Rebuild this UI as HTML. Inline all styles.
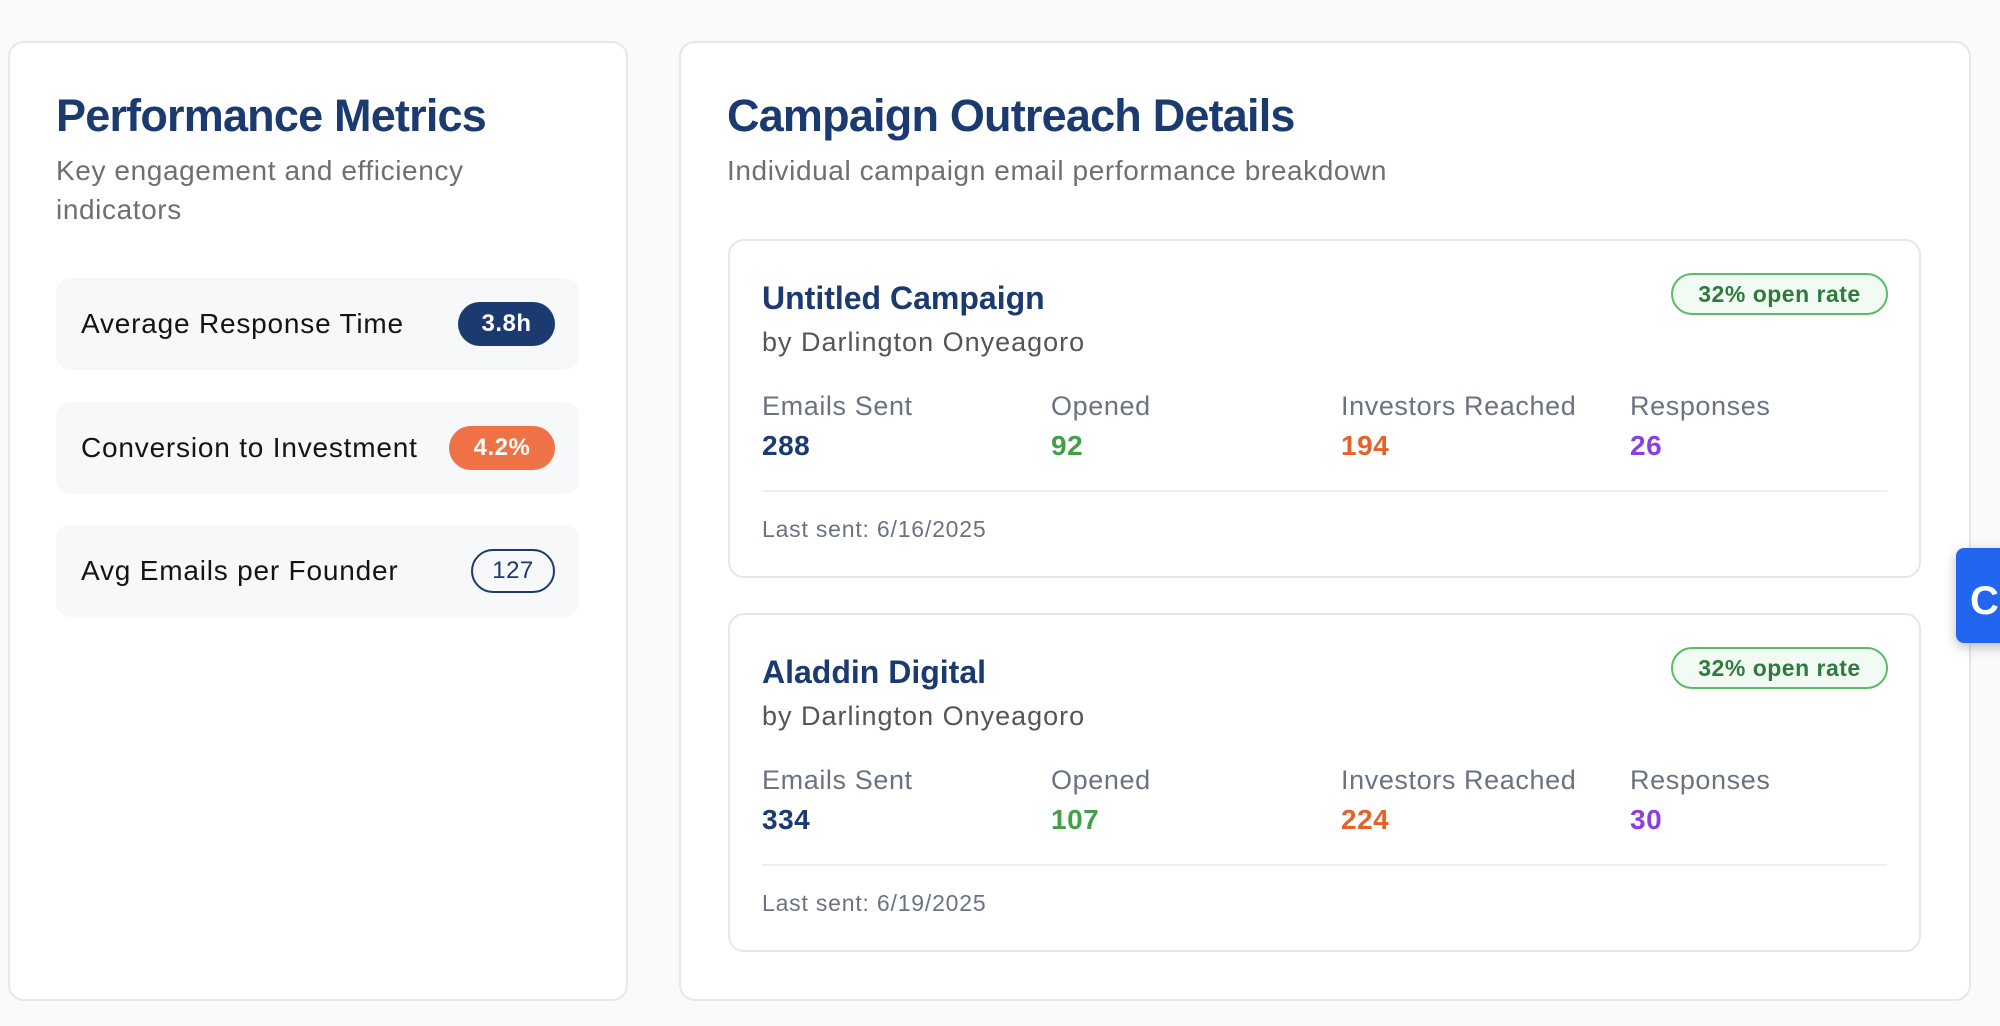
<!DOCTYPE html>
<html><head><meta charset="utf-8"><style>
*{margin:0;padding:0;box-sizing:border-box}
body{width:2000px;height:1026px;background:#f8fafc;font-family:"Liberation Sans",sans-serif;position:relative;overflow:hidden}
.abs{position:absolute;white-space:nowrap;line-height:1.15}
.card{position:absolute;top:41px;height:960px;background:#fff;border:2px solid #e6e7ea;border-radius:16px}
.h1{font-size:45px;font-weight:700;color:#1b3a6f;letter-spacing:-0.8px}
.sub{font-size:28px;color:#6f6f6f;line-height:39px;letter-spacing:0.6px}
.row{position:absolute;left:56px;width:523px;height:92px;background:#f7f8fa;border-radius:14px;display:flex;align-items:center;justify-content:space-between;padding:0 24px 0 25px;font-size:28px;letter-spacing:0.8px;color:#141414}
.pill{height:44px;border-radius:22px;display:flex;align-items:center;justify-content:center;font-size:24px;font-weight:700;letter-spacing:0.5px}
.camp{position:absolute;left:728px;width:1193px;height:339px;border:2px solid #e5e7eb;border-radius:16px;background:#fff}
.ct{font-size:32px;font-weight:700;color:#1b3a6f;left:32px;top:39px}
.by{font-size:27px;color:#555;left:32px;top:86px;letter-spacing:1px}
.lb{font-size:27px;color:#6b7280;top:150px;letter-spacing:0.6px}
.vl{font-size:28px;font-weight:700;top:189px;letter-spacing:0.5px}
.div{position:absolute;left:32px;right:32px;top:249px;height:2px;background:#eeeff1}
.ls{font-size:23px;color:#6b7280;left:32px;top:275px;letter-spacing:0.8px}
.badge{position:absolute;right:31px;top:32px;width:217px;height:42px;border:2px solid #5cbb66;background:#f1fbf3;border-radius:21px;display:flex;align-items:center;justify-content:center;font-size:23px;font-weight:700;color:#2f7a3c;letter-spacing:0.5px}
</style></head><body>
<div class="card" style="left:8px;width:620px"></div>
<div class="card" style="left:679px;width:1292px"></div>
<div class="abs h1" style="left:56px;top:90px">Performance Metrics</div>
<div class="abs sub" style="left:56px;top:151px">Key engagement and efficiency<br>indicators</div>
<div class="row" style="top:278px"><span>Average Response Time</span><span class="pill" style="width:97px;background:#1b3a6f;color:#fff">3.8h</span></div>
<div class="row" style="top:402px"><span>Conversion to Investment</span><span class="pill" style="width:106px;background:#ef7246;color:#fff">4.2%</span></div>
<div class="row" style="top:525px"><span>Avg Emails per Founder</span><span class="pill" style="width:84px;border:2px solid #1b3a6f;color:#1b3a6f;font-weight:400">127</span></div>

<div class="abs h1" style="left:727px;top:90px">Campaign Outreach Details</div>
<div class="abs sub" style="left:727px;top:151px">Individual campaign email performance breakdown</div>

<div class="camp" style="top:239px">
<div class="abs ct">Untitled Campaign</div>
<div class="badge">32% open rate</div>
<div class="abs by">by Darlington Onyeagoro</div>
<div class="abs lb" style="left:32px">Emails Sent</div><div class="abs lb" style="left:321px">Opened</div><div class="abs lb" style="left:611px">Investors Reached</div><div class="abs lb" style="left:900px">Responses</div>
<div class="abs vl" style="left:32px;color:#1b3a6f">288</div><div class="abs vl" style="left:321px;color:#43a047">92</div><div class="abs vl" style="left:611px;color:#e4612a">194</div><div class="abs vl" style="left:900px;color:#8b3fe0">26</div>
<div class="div"></div>
<div class="abs ls">Last sent: 6/16/2025</div>
</div>

<div class="camp" style="top:613px">
<div class="abs ct">Aladdin Digital</div>
<div class="badge">32% open rate</div>
<div class="abs by">by Darlington Onyeagoro</div>
<div class="abs lb" style="left:32px">Emails Sent</div><div class="abs lb" style="left:321px">Opened</div><div class="abs lb" style="left:611px">Investors Reached</div><div class="abs lb" style="left:900px">Responses</div>
<div class="abs vl" style="left:32px;color:#1b3a6f">334</div><div class="abs vl" style="left:321px;color:#43a047">107</div><div class="abs vl" style="left:611px;color:#e4612a">224</div><div class="abs vl" style="left:900px;color:#8b3fe0">30</div>
<div class="div"></div>
<div class="abs ls">Last sent: 6/19/2025</div>
</div>

<div style="position:absolute;left:1956px;top:548px;width:60px;height:95px;background:#2266f0;border-radius:8px;box-shadow:0 4px 12px rgba(0,0,0,.25);overflow:hidden">
<div class="abs" style="left:14px;top:30px;font-size:40px;font-weight:700;color:#fff">C</div></div>
</body></html>
